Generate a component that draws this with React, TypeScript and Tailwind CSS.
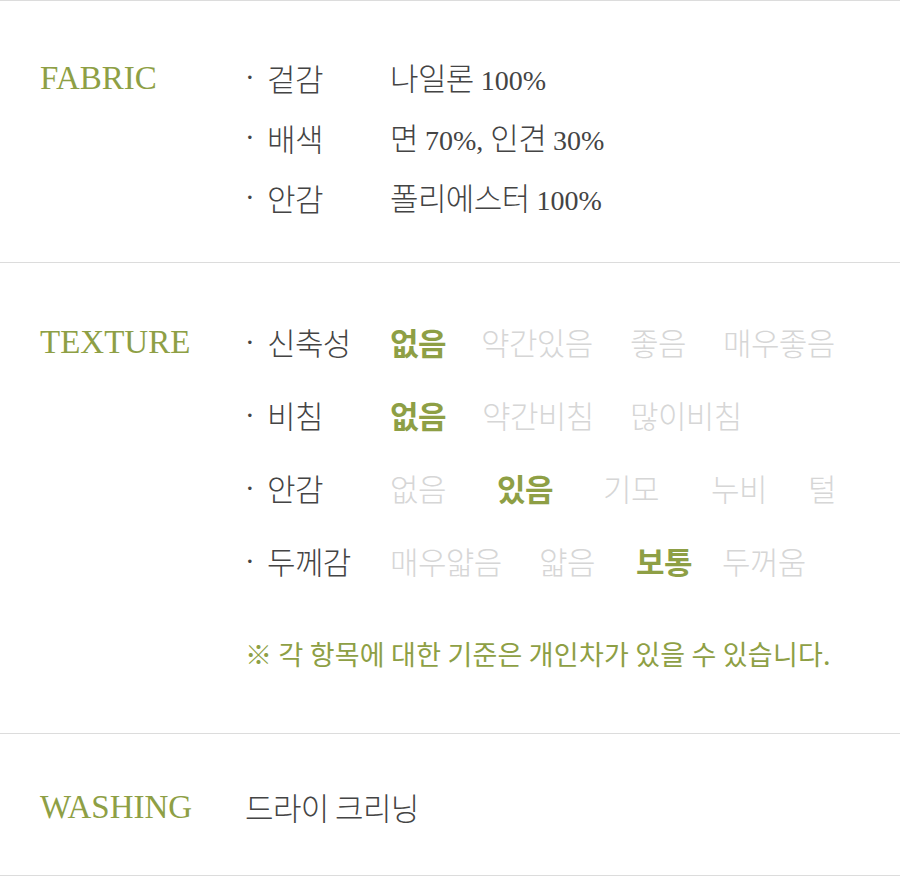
import React from "react";

type Opt = { t: string; on?: boolean; w: string };

const fabric = [
  { k: "겉감", v: "나일론 100%" },
  { k: "배색", v: "면 70%, 인견 30%" },
  { k: "안감", v: "폴리에스터 100%" },
];

const texture: { k: string; opts: Opt[] }[] = [
  {
    k: "신축성",
    opts: [
      { t: "없음", on: true, w: "w-[91px]" },
      { t: "약간있음", w: "w-[149px]" },
      { t: "좋음", w: "w-[93px]" },
      { t: "매우좋음", w: "w-auto" },
    ],
  },
  {
    k: "비침",
    opts: [
      { t: "없음", on: true, w: "w-[92px]" },
      { t: "약간비침", w: "w-[148px]" },
      { t: "많이비침", w: "w-auto" },
    ],
  },
  {
    k: "안감",
    opts: [
      { t: "없음", w: "w-[107px]" },
      { t: "있음", on: true, w: "w-[106px]" },
      { t: "기모", w: "w-[108px]" },
      { t: "누비", w: "w-[97px]" },
      { t: "털", w: "w-auto" },
    ],
  },
  {
    k: "두께감",
    opts: [
      { t: "매우얇음", w: "w-[149px]" },
      { t: "얇음", w: "w-[97px]" },
      { t: "보통", on: true, w: "w-[86px]" },
      { t: "두꺼움", w: "w-auto" },
    ],
  },
];

const serifLabel =
  "font-['Liberation_Serif',serif] text-[33px] text-[#8e9f45] whitespace-nowrap";
const kr = "font-['Noto_Sans_CJK_KR',sans-serif] text-[31px] tracking-[-0.6px] font-light";

function Mixed({ text }: { text: string }) {
  const parts = text.split(/([^\uAC00-\uD7A3]+)/).filter((p) => p.length > 0);
  return (
    <>
      {parts.map((p, i) =>
        /[\uAC00-\uD7A3]/.test(p) ? (
          <span key={i}>{p}</span>
        ) : (
          <span key={i} className="font-['Liberation_Serif',serif] text-[28px] tracking-normal font-normal">
            {p}
          </span>
        )
      )}
    </>
  );
}

function Bullet() {
  return (
    <span className="w-[22px] shrink-0 font-['Liberation_Serif',serif] text-[29px] text-[#444]">·</span>
  );
}

export default function App() {
  return (
    <div className="w-[900px] h-[890px] bg-white">
      {/* FABRIC */}
      <section className="flex border-t border-b border-[#dcdcdc] pt-[47px] pb-[34px]">
        <div className={`w-[245px] shrink-0 pl-[40px] leading-[60px] ${serifLabel}`}>FABRIC</div>
        <div className="flex flex-col">
          {fabric.map((r) => (
            <div key={r.k} className="flex items-center h-[60px] text-[#444]">
              <Bullet />
              <span className={`w-[123px] shrink-0 ${kr}`}>{r.k}</span>
              <span className={`whitespace-nowrap ${kr}`}>
                <Mixed text={r.v} />
              </span>
            </div>
          ))}
        </div>
      </section>

      {/* TEXTURE */}
      <section className="flex border-b border-[#dcdcdc] pt-[43px] pb-[59px]">
        <div className={`w-[245px] shrink-0 pl-[40px] leading-[73px] ${serifLabel}`}>TEXTURE</div>
        <div className="flex flex-col">
          {texture.map((r) => (
            <div key={r.k} className="flex items-center h-[73px]">
              <Bullet />
              <span className={`w-[123px] shrink-0 text-[#444] ${kr}`}>{r.k}</span>
              {r.opts.map((o) => (
                <span
                  key={o.t}
                  className={`${o.w} shrink-0 whitespace-nowrap ${kr} ${
                    o.on ? "!font-bold text-[#8e9f45]" : "text-[#d6d6d6]"
                  }`}
                >
                  {o.t}
                </span>
              ))}
            </div>
          ))}
          <p className="mt-[36px] h-[40px] leading-[40px] font-['Noto_Sans_CJK_KR',sans-serif] text-[27px] tracking-[0.2px] text-[#8e9f45] whitespace-nowrap">
            ※ 각 항목에 대한 기준은 개인차가 있을 수 있습니다.
          </p>
        </div>
      </section>

      {/* WASHING */}
      <section className="flex border-b border-[#dcdcdc] pt-[43px] pb-[38px]">
        <div className={`w-[245px] shrink-0 pl-[40px] leading-[60px] ${serifLabel}`}>WASHING</div>
        <div className={`h-[60px] leading-[60px] text-[#444] whitespace-nowrap ${kr}`}>드라이 크리닝</div>
      </section>
    </div>
  );
}
